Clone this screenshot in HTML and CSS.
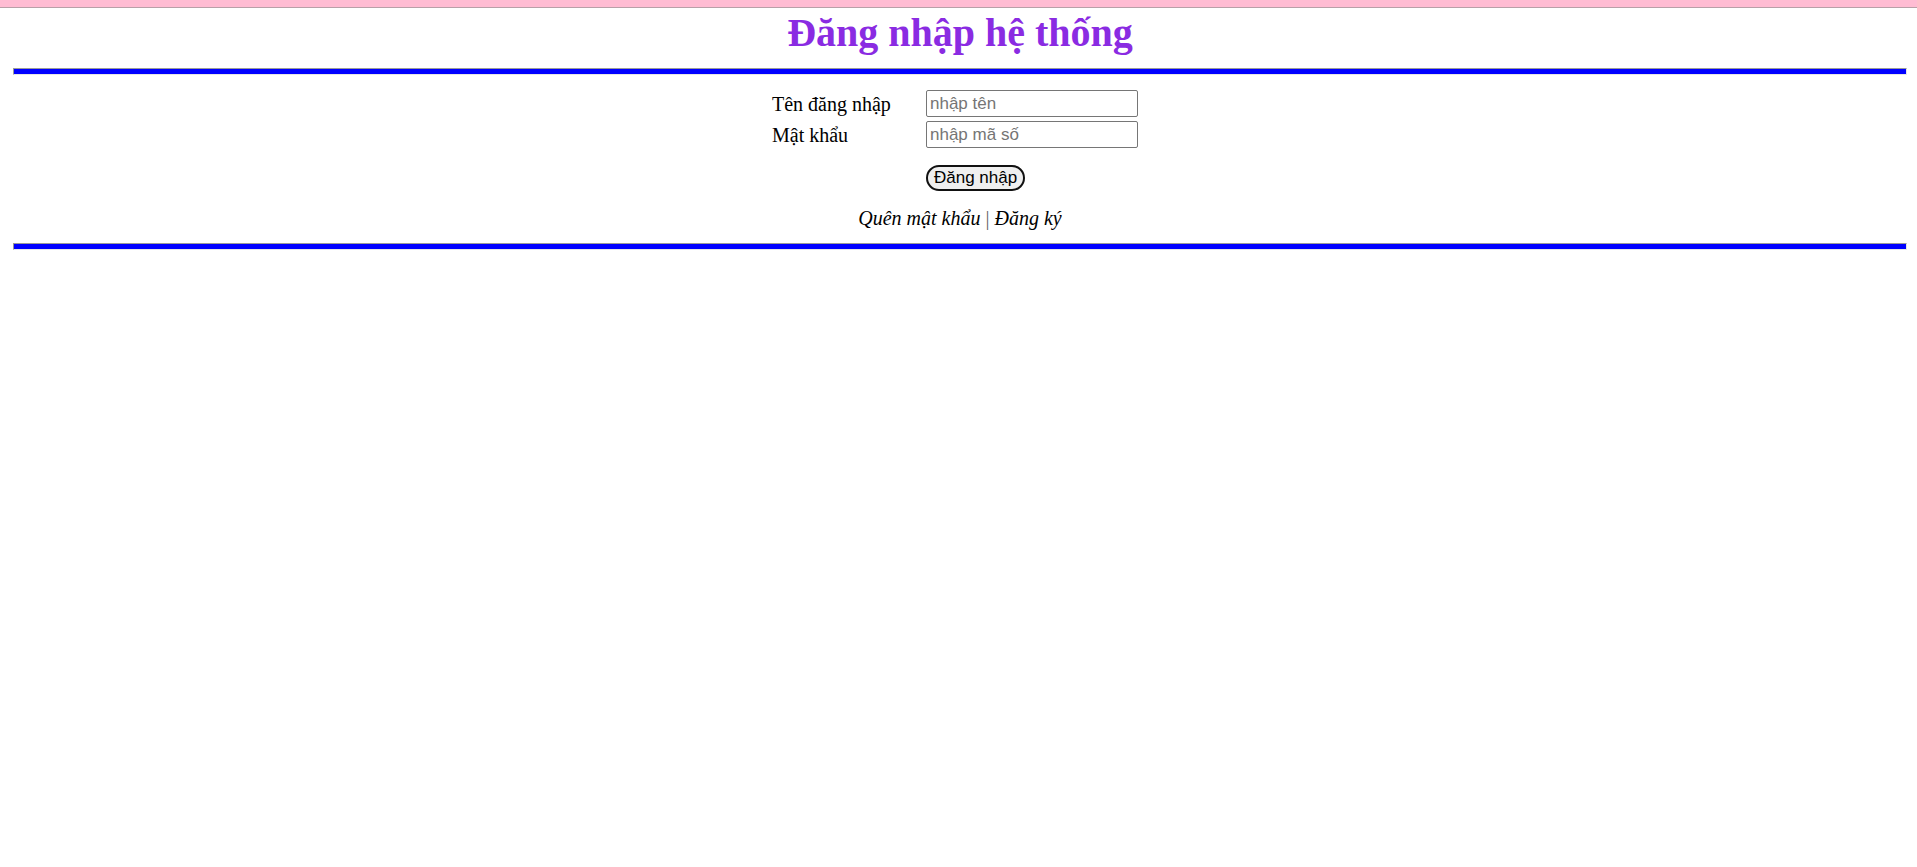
FILE: index.html
```html
<!DOCTYPE html>
<html lang="vi">
<head>
<meta charset="utf-8">
<title>Đăng nhập hệ thống</title>
<link rel="stylesheet" href="styles.css">
</head>
<body>
<div class="topbar"></div>
<div class="page">
  <h1 class="title">Đăng nhập hệ thống</h1>
  <hr class="rule">
  <form class="login">
    <label class="label" for="user">Tên đăng nhập</label>
    <input class="field" id="user" type="text" placeholder="nhập tên">
    <label class="label" for="pass">Mật khẩu</label>
    <input class="field" id="pass" type="password" placeholder="nhập mã số">
    <span></span>
    <button class="submit" type="button">Đăng nhập</button>
  </form>
  <p class="links"><span class="link">Quên mật khẩu</span> <span class="sep">|</span> <span class="link">Đăng ký</span></p>
  <hr class="rule">
</div>
</body>
</html>
```
FILE: styles.css
```css
html, body {
  margin: 0;
  padding: 0;
  background: #ffffff;
}
body {
  font-family: "Liberation Serif", "Times New Roman", serif;
  font-size: 20px;
  color: #000;
}
.topbar {
  height: 7px;
  background: #ffbcd3;
  border-bottom: 1px solid #b8a0a8;
}
.page {
  margin: 0 10px 0 13px;
}
.title {
  margin: 2px 0 0;
  text-align: center;
  font-size: 40px;
  font-weight: bold;
  color: #8a2be2;
  line-height: 45px;
}
.rule {
  height: 5px;
  margin: 13px 0 0;
  padding: 0;
  background: #0000ff;
  border-style: solid;
  border-width: 1px;
  border-color: #9a9a9a #e6e6e6 #e6e6e6 #9a9a9a;
}
.login {
  width: 376px;
  margin: 15px auto 0;
  display: grid;
  grid-template-columns: 154px 222px;
  row-gap: 4px;
  align-items: center;
}
.label {
  font-size: 20px;
  padding-top: 1px;
}
.field {
  box-sizing: border-box;
  width: 212px;
  height: 27px;
  margin: 0;
  padding: 1px 3px;
  border: 1px solid #767676;
  border-radius: 2px;
  font-family: "Liberation Sans", Arial, sans-serif;
  font-size: 17px;
  color: #000;
}
.field::placeholder {
  color: #757575;
}
.submit {
  justify-self: start;
  box-sizing: border-box;
  height: 26px;
  margin-top: 13px;
  padding: 0 6px;
  border: 2px solid #111;
  border-radius: 13px;
  background: #efefef;
  font-family: "Liberation Sans", Arial, sans-serif;
  font-size: 17px;
  color: #000;
}
.links {
  margin: 16px 0 0;
  text-align: center;
  font-style: italic;
  font-size: 20px;
  line-height: 23px;
}
.sep {
  font-style: normal;
  color: #666;
}
```
